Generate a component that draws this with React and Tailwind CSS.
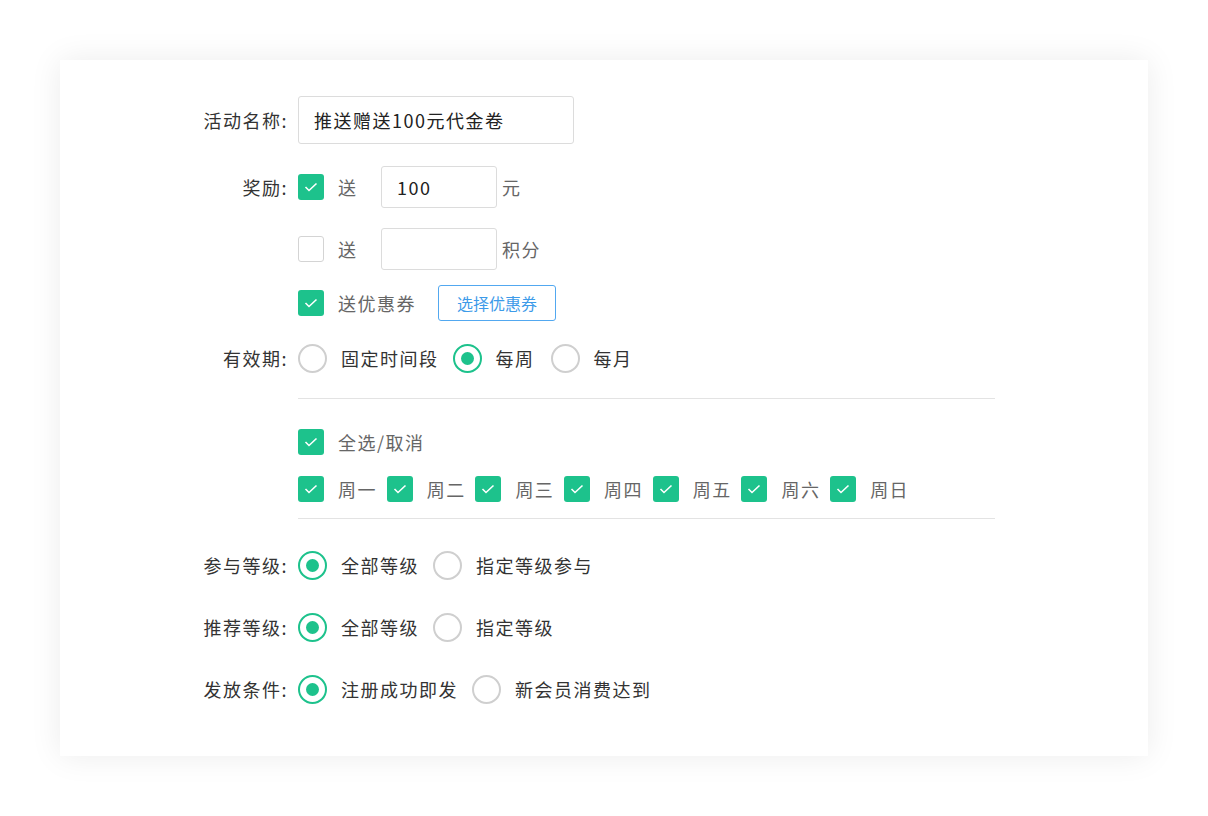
import React from "react";

function Check({ on }) {
  return on ? (
    <span className="w-[26px] h-[26px] rounded-[3px] bg-[#1dc28c] flex items-center justify-center shrink-0">
      <svg width="14" height="10" viewBox="0 0 14 10"><path d="M1.5 5l3.5 3.5L12.5 1.5" stroke="#fff" strokeWidth="1.6" fill="none" /></svg>
    </span>
  ) : (
    <span className="w-[26px] h-[26px] rounded-[3px] border border-[#d4d4d4] bg-white shrink-0" />
  );
}
function Radio({ on }) {
  return on ? (
    <span className="w-[29px] h-[29px] rounded-full border-2 border-[#1dc28c] flex items-center justify-center shrink-0">
      <span className="w-[13px] h-[13px] rounded-full bg-[#1dc28c]" />
    </span>
  ) : (
    <span className="w-[29px] h-[29px] rounded-full border-2 border-[#cfcfcf] shrink-0" />
  );
}
function Row({ label, children, cls = "" }) {
  return (
    <div className={"flex items-center h-[30px] " + cls}>
      <div className="w-[238px] pr-[10px] text-right text-[#333] shrink-0">{label}</div>
      <div className="flex items-center">{children}</div>
    </div>
  );
}
function RadioOpt({ on, text, mr = "mr-[10px]" }) {
  return (
    <span className={"flex items-center " + mr}>
      <Radio on={on} />
      <span className="ml-[14px] text-[#333]">{text}</span>
    </span>
  );
}

export default function App() {
  const days = ["周一", "周二", "周三", "周四", "周五", "周六", "周日"];
  return (
    <div className="w-[1208px] h-[816px] bg-white pt-[60px] pl-[60px]" style={{ fontFamily: '"Noto Sans CJK SC", "Noto Sans", sans-serif' }}>
      <div className="w-[1088px] h-[696px] bg-white shadow-[0_0_30px_rgba(0,0,0,0.08)] pt-[36px] text-[18px] tracking-[1.5px]">
        <div className="flex items-center">
          <div className="w-[238px] pr-[10px] text-right text-[#333] shrink-0">活动名称:</div>
          <div className="w-[276px] h-[48px] border border-[#dcdcdc] rounded-[3px] flex items-center pl-[15px] text-[#222]">推送赠送100元代金卷</div>
        </div>
        <div className="flex items-center mt-[22px]">
          <div className="w-[238px] pr-[10px] text-right text-[#333] shrink-0">奖励:</div>
          <Check on />
          <span className="ml-[14px] w-[43px] text-[#666]">送</span>
          <div className="w-[116px] h-[42px] border border-[#dcdcdc] rounded-[3px] flex items-center pl-[15px] text-[#222]">100</div>
          <span className="ml-[5px] text-[#666]">元</span>
        </div>
        <div className="flex items-center mt-[20px]">
          <div className="w-[238px] shrink-0" />
          <Check />
          <span className="ml-[14px] w-[43px] text-[#666]">送</span>
          <div className="w-[116px] h-[42px] border border-[#dcdcdc] rounded-[3px]" />
          <span className="ml-[5px] text-[#666]">积分</span>
        </div>
        <Row label="" cls="mt-[18px]">
          <Check on />
          <span className="ml-[14px] text-[#666]">送优惠券</span>
          <span className="ml-[22px] w-[118px] h-[36px] border border-[#52a8f0] rounded-[3px] flex items-center justify-center text-[#3d9be9] text-[16px] tracking-normal">选择优惠券</span>
        </Row>
        <Row label="有效期:" cls="mt-[25px]">
          <RadioOpt text="固定时间段" mr="mr-[14px]" />
          <RadioOpt on text="每周" mr="mr-[16px]" />
          <RadioOpt text="每月" />
        </Row>
        <div className="ml-[238px] w-[697px] h-px bg-[#e3e3e3] mt-[25px]" />
        <Row label="" cls="mt-[28px]">
          <Check on />
          <span className="ml-[14px] text-[#666]">全选/取消</span>
        </Row>
        <Row label="" cls="mt-[17px]">
          {days.map((d) => (
            <span key={d} className="flex items-center w-[88.7px]">
              <Check on />
              <span className="ml-[14px] text-[#666]">{d}</span>
            </span>
          ))}
        </Row>
        <div className="ml-[238px] w-[697px] h-px bg-[#e3e3e3] mt-[14px]" />
        <Row label="参与等级:" cls="mt-[31px]">
          <RadioOpt on text="全部等级" mr="mr-[14px]" />
          <RadioOpt text="指定等级参与" />
        </Row>
        <Row label="推荐等级:" cls="mt-[32px]">
          <RadioOpt on text="全部等级" mr="mr-[14px]" />
          <RadioOpt text="指定等级" />
        </Row>
        <Row label="发放条件:" cls="mt-[32px]">
          <RadioOpt on text="注册成功即发" mr="mr-[14px]" />
          <RadioOpt text="新会员消费达到" />
        </Row>
      </div>
    </div>
  );
}
